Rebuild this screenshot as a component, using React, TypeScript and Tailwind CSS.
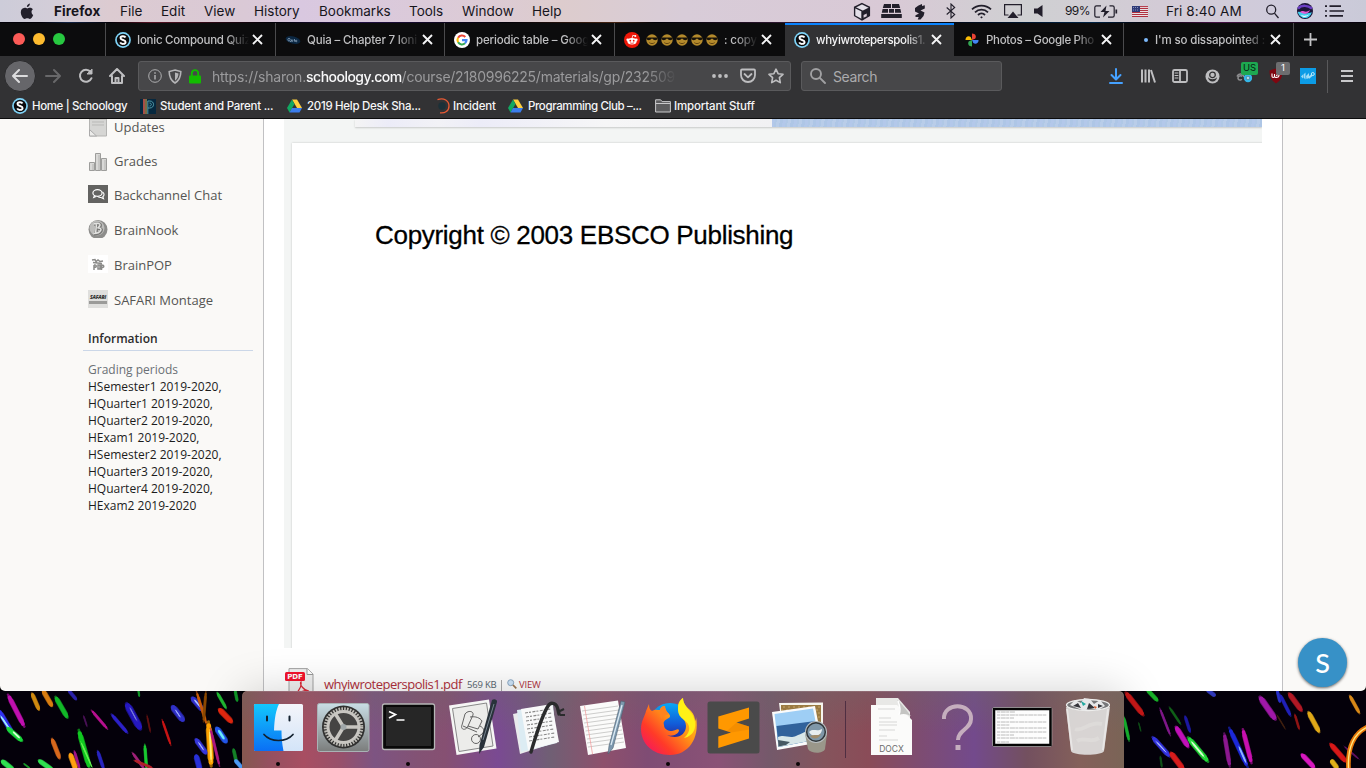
import type { ReactNode } from 'react';

const UI = "font-['Inter','Liberation_Sans',sans-serif]";
const PAGE = "font-['Open_Sans','Noto_Sans',sans-serif]";

/* ---------- menu bar ---------- */

const menus = [
  { label: 'Firefox', cls: 'w-[66px] font-bold tracking-[0.1px]' },
  { label: 'File', cls: 'w-[41px]' },
  { label: 'Edit', cls: 'w-[43px]' },
  { label: 'View', cls: 'w-[50px]' },
  { label: 'History', cls: 'w-[65px]' },
  { label: 'Bookmarks', cls: 'w-[90px]' },
  { label: 'Tools', cls: 'w-[53px]' },
  { label: 'Window', cls: 'w-[70px]' },
  { label: 'Help', cls: 'w-[40px]' },
];

function MenuBar() {
  return (
    <header className="flex h-[22px] shrink-0 items-center bg-[linear-gradient(90deg,#cdccd9_0%,#d3cdd8_4%,#dccbd1_8%,#dac9d6_18%,#d9c8e0_22%,#dccbd6_35%,#ddcccd_41%,#d8ccd8_50%,#d9c9d6_65%,#cfd0d2_75%,#d3cbd6_85%,#cecbdc_95%,#cacad8_100%)] text-[13.5px] leading-[22px] text-[#17151c]">
      <svg className="ml-5 mr-5 h-[17px] w-[14px] shrink-0" viewBox="0 0 14 17" fill="#221f2b">
        <path d="M9.9.6c.1 1.900-1.300 3.500-3 3.500C6.700 2.300 8.200.8 9.900.6zM11.500 8.800c0-1.600 1.300-2.400 1.400-2.500-1-1.300-2.300-1.500-2.700-1.500-1.200-.1-2.300.7-2.900.7s-1.500-.7-2.500-.7C2.300 4.900.800 6.700.8 9.300c0 2.700 1.900 6.600 3.900 6.600 1 0 1.400-.6 2.600-.6s1.600.6 2.600.6c1.500 0 2.800-2.500 3.300-4-.2-.1-1.700-.8-1.700-3.100z" />
      </svg>
      <nav className="flex">
        {menus.map((m) => (
          <span key={m.label} className={`shrink-0 whitespace-nowrap ${m.cls}`}>{m.label}</span>
        ))}
      </nav>
      <div className="ml-auto flex h-full items-center pr-[22px]">
        <svg className="mr-[10px] h-[19px] w-[18px]" viewBox="0 0 17 18">
          <path d="M8.500 1.500L15.500 5v8l-7 4-7-4V5z" fill="#e3dfe8" stroke="#221f2b" strokeWidth="1.300" />
          <path d="M8.500 8.500l7-3.500v8l-7 4z" fill="#221f2b" /><path d="M10 12.300l3-1.500v2.700L10 15z" fill="#d8ccd8" />
          <path d="M1.500 5l7 3.500v8" fill="none" stroke="#221f2b" strokeWidth="1.300" />
        </svg>
        <svg className="mr-3 h-[15px] w-[21px]" viewBox="0 0 21 15" fill="#221f2b">
          <path d="M3 0h7v4H1.800zM11 0h7l1.200 4H11zM1.600 5H7v3.800H.8zM8 5h5v3.800H8zM14 5h5.400l.8 3.800H14zM.2 10h20.600v4H.2z" />
        </svg>
        <svg className="mr-5 h-[17px] w-[12px]" viewBox="0 0 12 17" fill="#221f2b">
          <path d="M4.500 2.500L8 1v2l2.800-.8v3.300L6.500 7.500l4 2-1 3.500-3 3.500H3.700l1-2.500H1.500v-1.800L5 10.500 1 8.500V5z" />
        </svg>
        <svg className="mr-[15px] h-[16px] w-[10px]" viewBox="0 0 10 16" fill="none" stroke="#221f2b" strokeWidth="1.100">
          <path d="M.7 4.500l8 7L5 15V1l3.700 3.500-8 7" />
        </svg>
        <svg className="mr-3 h-[15px] w-[21px]" viewBox="0 0 21 15" fill="none" stroke="#221f2b" strokeWidth="1.800">
          <path d="M1 5.300c5.300-5 13.700-5 19 0M4 8.300c3.700-3.500 9.300-3.500 13 0M7 11c2-2 5-2 7 0" /><path d="M10.500 12.200l-1.300 1 1.300 1.300 1.300-1.300z" fill="#221f2b" stroke="none" />
        </svg>
        <svg className="mr-3 h-[15px] w-[18px]" viewBox="0 0 18 15">
          <path d="M4.500 11H.6V.6h16.800V11h-3.900" fill="none" stroke="#221f2b" strokeWidth="1.200" /><path d="M9 7.500l5.500 6.500h-11z" fill="#221f2b" />
        </svg>
        <svg className="mr-[22px] h-[12px] w-[9px]" viewBox="0 0 9 12" fill="#221f2b"><path d="M0 3.500h3.500L8.500 0v12L3.500 8.500H0z" /></svg>
        <span className="w-[29px] whitespace-nowrap text-[12px] tracking-[-0.6px]">99%</span>
        <svg className="mr-[14px] h-[13px] w-[24px]" viewBox="0 0 24 13" fill="none" stroke="#221f2b" strokeWidth="1.200">
          <path d="M7 .8H2.500C1.500.8.800 1.500.8 2.500v8c0 1 .7 1.700 1.700 1.700H6M15.500.8h3c1 0 1.700.7 1.700 1.700v8c0 1-.7 1.700-1.700 1.700H14" />
          <path d="M12.500.5L6.500 7h4l-1.500 5.500L15.500 6h-4z" fill="#221f2b" stroke="none" /><path d="M22.300 4.500v4" strokeWidth="1.700" />
        </svg>
        <svg className="mr-[18px] h-[11px] w-[16px]" viewBox="0 0 16 11">
          <path d="M0 0h16v11H0z" fill="#e9e0e4" /><path d="M0 .6h16M0 2.500h16M0 4.500h16M0 6.500h16M0 8.500h16M0 10.500h16" stroke="#b03140" /><path d="M0 0h8v6H0z" fill="#2f3b78" /><path d="M1 1.500h6M1 4h6" stroke="#9fa6cc" strokeWidth=".8" strokeDasharray="1 1" />
        </svg>
        <span className="w-[100px] whitespace-nowrap tracking-[0.1px]">Fri 8:40 AM</span>
        <svg className="mr-[18px] h-[15px] w-[13px]" viewBox="0 0 13 15" fill="none" stroke="#221f2b" strokeWidth="1.300"><circle cx="5.200" cy="5.700" r="4.500" /><path d="M8.400 9.200L12.500 14" /></svg>
        <svg className="mr-3 h-4 w-4" viewBox="0 0 16 16">
          <circle cx="8" cy="8" r="8" fill="#1b1437" /><path d="M1 5.500c4-4 10-3 14 0" stroke="#6b3fc4" strokeWidth="2.500" fill="none" /><path d="M.8 9c4-1 5 3 14 .3-1 3.500-3.500 5.800-6.800 5.800S1.500 12.500.8 9z" fill="#44d0ee" /><path d="M3 9c3-3 5 2 10-2-1 4-6 5-10 2z" fill="#e45ad2" /><path d="M4 12c3 1 5 1 8-.5-2 3-6 3.500-8 .5z" fill="#e8fbff" />
        </svg>
        <svg className="h-[12px] w-[19px]" viewBox="0 0 19 12" stroke="#221f2b" strokeWidth="1.700"><path d="M0 1.200h2M4.500 1.200H16M0 6h2M4.500 6H19M0 10.800h2M4.500 10.800H18" /></svg>
      </div>
    </header>
  );
}

/* ---------- site icons ---------- */

function SchoologyIcon() {
  return (
    <svg className="h-4 w-4" viewBox="0 0 16 16">
      <circle cx="8" cy="8" r="7.900" fill="#7fd3f7" /><circle cx="8" cy="8" r="6.200" fill="#0a0a0c" />
      <path d="M10.500 5.500C9.700 3.700 5.500 3.700 5.500 6c0 2.500 5.100 1.500 5.100 4 0 2.500-4.500 2.500-5.400.4" fill="none" stroke="#fff" strokeWidth="1.900" />
    </svg>
  );
}

function DriveIcon() {
  return (
    <svg className="h-[14px] w-[15px]" viewBox="0 0 15 14">
      <path d="M5 .5h5l5 8.500h-5z" fill="#ffcf3f" /><path d="M5 .5L7.500 4.900 2.500 13.500 0 9z" fill="#11a861" /><path d="M5 9h10l-2.500 4.500h-10z" fill="#3b7ded" />
    </svg>
  );
}

function QuiaIcon() {
  return (
    <svg className="h-4 w-4" viewBox="0 0 16 16">
      <ellipse cx="8" cy="8" rx="7.500" ry="3.600" transform="rotate(14 8 8)" fill="#0b2742" /><path d="M4 6.200c-1.500 0-1.500 3 0 3s1.500-3 0-3zM5 9l1 1M6.500 7.500v1.800h1.300V7.500M9.500 7v2.600M11.200 8.200c-1.200 0-1 1.600 0 1.600s1-1.600 0-1.600z" stroke="#9ab4cd" strokeWidth=".7" fill="none" />
    </svg>
  );
}

function GoogleIcon() {
  return (
    <svg className="h-4 w-4" viewBox="0 0 16 16" fill="none" strokeWidth="2.100">
      <circle cx="8" cy="8" r="8" fill="#fff" /><path d="M11.300 5A4.500 4.500 0 0 0 4.100 5.700" stroke="#ea4335" /><path d="M4.100 5.700a4.500 4.500 0 0 0 0 4.600" stroke="#fbbc05" /><path d="M4.100 10.300a4.500 4.500 0 0 0 6.900 1" stroke="#34a853" /><path d="M8 8.100h4.500a4.500 4.500 0 0 1-1.500 3.200" stroke="#4285f4" />
    </svg>
  );
}

function RedditIcon() {
  return (
    <svg className="h-4 w-4" viewBox="0 0 16 16">
      <circle cx="8" cy="8" r="8" fill="#ee1708" /><ellipse cx="8" cy="9.300" rx="4.600" ry="3.300" fill="#fff" /><circle cx="3.700" cy="7.800" r="1.300" fill="#fff" /><circle cx="12.300" cy="7.800" r="1.300" fill="#fff" /><path d="M8 6.300l.8-3 2.300.6" stroke="#fff" fill="none" strokeWidth=".8" /><circle cx="11.300" cy="4" r="1" fill="#fff" /><circle cx="6.300" cy="8.700" r=".9" fill="#ee1708" /><circle cx="9.700" cy="8.700" r=".9" fill="#ee1708" /><path d="M6 10.700c1 .8 3 .8 4 0" stroke="#ee1708" fill="none" strokeWidth=".7" />
    </svg>
  );
}

function PhotosIcon() {
  return (
    <svg className="h-[14px] w-[14px]" viewBox="0 0 16 16">
      <path d="M8 8V.5c4 0 5.500 3.500 3.500 6z" fill="#fbbc05" transform="rotate(-90 8 8)" /><path d="M8 8V.5c4 0 5.500 3.500 3.500 6z" fill="#ea4335" /><path d="M8 8V.5c4 0 5.500 3.500 3.500 6z" fill="#4285f4" transform="rotate(90 8 8)" /><path d="M8 8V.5c4 0 5.500 3.500 3.500 6z" fill="#34a853" transform="rotate(180 8 8)" />
    </svg>
  );
}

function CoolFace() {
  return (
    <svg className="h-3 w-3 shrink-0" viewBox="0 0 12 12">
      <circle cx="6" cy="6" r="5.700" fill="#b48a2c" /><path d="M.4 3.600h11.200v1c-.3 1.900-3.800 2.300-4.900.2h-1.400c-1.100 2.100-4.600 1.700-4.900-.2z" fill="#16110a" /><path d="M3.300 8.600c1.500 1.300 3.900 1.300 5.400 0" stroke="#5b3d0d" fill="none" strokeWidth=".9" />
    </svg>
  );
}

/* ---------- tab strip ---------- */

type Tab = { w: string; icon: ReactNode; text: ReactNode; active?: boolean; tone: string };

const tabs: Tab[] = [
  { w: 'w-[170px]', icon: <SchoologyIcon />, text: 'Ionic Compound Quiz', tone: 'text-[#c0c0c2] tracking-[-0.25px]' },
  { w: 'w-[169px]', icon: <QuiaIcon />, text: 'Quia – Chapter 7 Ioni', tone: 'text-[#c0c0c2] tracking-[-0.17px]' },
  { w: 'w-[170px]', icon: <GoogleIcon />, text: 'periodic table – Goog', tone: 'text-[#c0c0c2] tracking-[-0.17px]' },
  {
    w: 'w-[171px]',
    icon: <RedditIcon />,
    text: (
      <span className="flex items-center gap-[3px]">
        <CoolFace /><CoolFace /><CoolFace /><CoolFace /><CoolFace />
        <span className="ml-[3px] whitespace-nowrap">: copy</span>
      </span>
    ),
    tone: 'text-[#c0c0c2] tracking-[-0.1px]',
  },
  { w: 'w-[169px]', icon: <SchoologyIcon />, text: 'whyiwroteperspolis1.', active: true, tone: 'text-[#f4f4f5] tracking-[-0.33px]' },
  { w: 'w-[169px]', icon: <PhotosIcon />, text: 'Photos – Google Pho', tone: 'text-[#c0c0c2] tracking-[-0.3px]' },
  { w: 'w-[170px]', icon: <span className="ml-[11px] h-1 w-1 rounded-full bg-[#7cb9fb]" />, text: "I'm so dissapointed :", tone: 'text-[#c0c0c2] tracking-[-0.15px]' },
];

function TabStrip() {
  return (
    <div className="flex h-[34px] shrink-0 bg-[#0c0c0d] bg-[linear-gradient(90deg,#020008_0_3%,#124_5%,#020008_8%,#512_11%,#020008_20%,#214_26%,#020008_37%,#421_45%,#020008_48%,#424_62%,#020008_66%,#024_80%,#020008_84%,#414_89%,#020008)] bg-[length:100%_1px] bg-no-repeat">
      <div className="flex w-[105px] shrink-0 items-center gap-2 pl-[13px]">
        <span className="h-3 w-3 rounded-full bg-[#fc5b57]" />
        <span className="h-3 w-3 rounded-full bg-[#fdbb2f]" />
        <span className="h-3 w-3 rounded-full bg-[#27c840]" />
      </div>
      {tabs.map((t, i) => (
        <div
          key={i}
          className={`mt-px flex shrink-0 items-center ${t.w} ${t.active ? 'border-t-2 border-[#0a84ff] bg-[#323234] pb-0.5 pl-[9px]' : `${i === 5 ? 'pl-[11px]' : 'border-l border-[#4b4b4d] pl-[9px]'}`}`}
        >
          <span className="flex h-4 w-4 shrink-0 items-center">{t.icon}</span>
          <span className={`w-[112px] overflow-hidden whitespace-nowrap text-[11.5px] leading-4 font-medium [mask-image:linear-gradient(90deg,#000_80%,transparent)] ${i === 5 ? 'ml-[5px]' : 'ml-1.5'} ${t.tone}`}>{t.text}</span>
          <svg className="ml-[3px] h-[11px] w-[11px] shrink-0" viewBox="0 0 11 11" stroke="#f4f4f5" strokeWidth="1.900"><path d="M1 1l9 9M10 1l-9 9" /></svg>
        </div>
      ))}
      <div className="mt-px flex items-center border-l border-[#4b4b4d] pl-[9px]">
        <svg className="h-[15px] w-[15px]" viewBox="0 0 15 15" stroke="#c4c4c6" strokeWidth="1.800"><path d="M7.500 1v13M1 7.500h13" /></svg>
      </div>
    </div>
  );
}

/* ---------- navigation toolbar ---------- */

function Slot({ children, className = 'w-8' }: { children: ReactNode; className?: string }) {
  return <span className={`flex h-8 shrink-0 items-center justify-center ${className}`}>{children}</span>;
}

function NavBar() {
  const s = { fill: 'none', stroke: '#bebec0', strokeWidth: 2, strokeLinecap: 'round', strokeLinejoin: 'round' } as const;
  return (
    <div className="flex h-10 shrink-0 items-center bg-[#323234] pl-1">
      <span className="flex h-8 w-8 items-center justify-center rounded-full border border-[#2a2a2c] bg-[#66666a]">
        <svg className="h-4 w-4" viewBox="0 0 16 16" {...s} stroke="#dcdcde"><path d="M1 8h14M7 2L1 8l6 6" /></svg>
      </span>
      <Slot className="w-[34px]"><svg className="h-4 w-4" viewBox="0 0 16 16" {...s} stroke="#68686a"><path d="M1 8h14M9 2l6 6-6 6" /></svg></Slot>
      <Slot className="w-[31px]"><svg className="h-4 w-4" viewBox="0 0 16 16" {...s}><path d="M13.500 10.200A6 6 0 1 1 12.600 4" /><path d="M14 1.500V6H9.500z" fill="#bebec0" strokeWidth="1" /></svg></Slot>
      <Slot className="w-[32px]"><svg className="h-4 w-4" viewBox="0 0 16 16" {...s}><path d="M1 8l7-7 7 7M3 8v7h10V8" /><path d="M6.500 14.500V10h3v4.500" /></svg></Slot>
      <div className="ml-[5px] flex h-[30px] w-[653px] items-center rounded-[3px] border border-[#5a5a5c] bg-[#474749] pl-[9px] text-[14px]">
        <svg className="h-[14px] w-[14px]" viewBox="0 0 14 14" fill="none" stroke="#aeaeb0"><circle cx="7" cy="7" r="6.300" /><path d="M7 6v4.500M7 3.300v1.500" strokeWidth="1.500" /></svg>
        <svg className="ml-1.5 h-[15px] w-[14px]" viewBox="0 0 14 15"><path d="M7 1l5.800 1.500c0 5.500-1.600 9-5.800 11.500C2.800 11.500 1.200 8 1.200 2.500z" fill="none" stroke="#b4b4b6" strokeWidth="1.600" /><path d="M7 3.600l3.500.9c-.2 3.200-1.200 5.600-3.500 7.200z" fill="#b4b4b6" /></svg>
        <svg className="ml-[7px] h-[15px] w-[12px]" viewBox="0 0 12 15"><path d="M2.800 7V4.300a3.200 3.200 0 0 1 6.400 0V7" fill="none" stroke="#12bc00" strokeWidth="1.900" /><rect y="6.500" width="12" height="8" rx="1" fill="#12bc00" /></svg>
        <span className="ml-[11px] w-[465px] overflow-hidden whitespace-nowrap tracking-[-0.16px] text-[#9b9b9d] [mask-image:linear-gradient(90deg,#000_93%,transparent)]">
          https://sharon.<span className="font-medium tracking-[-0.52px] text-[#f9f9fa]">schoology.com</span><span className="tracking-[-0.26px]">/course/2180996225/materials/gp/232509</span>
        </span>
        <svg className="ml-auto h-4 w-4" viewBox="0 0 16 16" fill="#bebec0"><circle cx="2" cy="8" r="1.900" /><circle cx="8" cy="8" r="1.900" /><circle cx="14" cy="8" r="1.900" /></svg>
        <svg className="ml-3 h-4 w-4" viewBox="0 0 16 16" {...s} strokeWidth="1.800"><path d="M2 1.500h12c.6 0 1 .4 1 1V7c0 4-3 7-7 7s-7-3-7-7V2.500c0-.6.4-1 1-1z" /><path d="M4.500 6L8 9.300 11.500 6" /></svg>
        <svg className="mr-[6px] ml-3 h-4 w-4" viewBox="0 0 16 16" {...s} strokeWidth="1.600"><path d="M8 1.200l2.100 4.500 4.900.6-3.600 3.400.9 4.900L8 12.200l-4.300 2.400.9-4.900L1 6.300l4.900-.6z" /></svg>
      </div>
      <div className="ml-[10px] flex h-[30px] w-[201px] items-center rounded-[3px] border border-[#5a5a5c] bg-[#474749] pl-2 text-[14px] text-[#ababad]">
        <svg className="h-4 w-4" viewBox="0 0 16 16" fill="none" stroke="#a0a0a2" strokeWidth="1.900" strokeLinecap="round"><circle cx="6" cy="6" r="5" /><path d="M9.800 9.800L15 15" /></svg>
        <span className="ml-[7px] tracking-[-0.4px]">Search</span>
      </div>
      <div className="ml-[98px] flex">
        <Slot><svg className="h-4 w-[14px]" viewBox="0 0 14 16" {...s} stroke="#45a1ff"><path d="M7 1v10M2.500 7L7 11.500 11.500 7M1 15h12" /></svg></Slot>
        <Slot><svg className="h-4 w-4" viewBox="0 0 16 16" {...s} strokeLinecap="butt"><path d="M2 1.500v13M5.500 1.500v13M9 1.500v13M11 2l4 12.500" /></svg></Slot>
        <Slot><svg className="h-4 w-4" viewBox="0 0 16 16" {...s} strokeWidth="1.800"><rect x="1" y="2" width="14" height="12" rx="1.500" /><path d="M8 2v12" /><path d="M3 5h3M3 7.500h3M3 10h3" strokeWidth="1" /></svg></Slot>
        <Slot><svg className="h-[15px] w-[15px]" viewBox="0 0 15 15"><circle cx="7.500" cy="7.500" r="7" fill="#bebec0" /><path d="M3 8.300c.3 2.700 2 4.200 4.500 4.200s4.200-1.500 4.500-4.200c-1 1.300-2.500 2-4.500 2s-3.500-.7-4.500-2z" fill="#323234" /><circle cx="7.500" cy="5.900" r="2.800" fill="#bebec0" stroke="#323234" strokeWidth="1.300" /></svg></Slot>
        <Slot className="relative w-8">
          <svg className="h-4 w-4" viewBox="0 0 16 16" fill="none" stroke="#8d8d8f" strokeWidth="1.500"><path d="M6 8.500c-1.500-1.500-4.500 0-4 2s3.500 2 3.500.5M1 8.500C2.500 5 7 5 8 9" /><circle cx="12" cy="10" r="3" stroke="#35b7e8" strokeWidth="2.400" /><circle cx="12" cy="10" r="1.300" fill="#e5f7ff" stroke="#7bc" strokeWidth=".8" /></svg>
          <span className="absolute top-[2px] left-[13px] flex h-[13px] w-[17px] items-center justify-center rounded-[2px] bg-[#1ea851] text-[9.500px] text-[#052310]">US</span>
        </Slot>
        <Slot className="relative w-8">
          <svg className="h-4 w-[14px]" viewBox="0 0 14 16"><path d="M7 .5l6.500 2c0 6-1.500 10-6.500 13C2 12.500.5 8.500.5 2.500z" fill="#800610" /><path d="M3 5.500v2.800c0 1.500 2.500 1.500 2.500 0V6M5.500 8.300c0 1.500 4.500 1.500 4.500-.5S7.500 6.500 7.500 8" fill="none" stroke="#fff" strokeWidth="1.100" /></svg>
          <span className="absolute top-[2px] left-4 flex h-[13px] w-[14px] items-center justify-center rounded-[2px] bg-[#6d6d6f] text-[9.500px] text-white">1</span>
        </Slot>
        <Slot><svg className="h-4 w-4" viewBox="0 0 16 16"><path d="M0 0h16v16H0z" fill="#0c9ce6" /><path d="M1 8.500l2-2v4zM3.500 6.500l2-2v7l-2-2zM6 8l3-3v5L6.500 11z" fill="#9edcf7" /><path d="M8.500 10l3.500-3" stroke="#9edcf7" strokeWidth="2.200" /><circle cx="12.800" cy="6" r="1.500" fill="none" stroke="#bde9fa" /></svg></Slot>
      </div>
      <span className="ml-[3px] h-[33px] w-px bg-[#59595b]" />
      <svg className="ml-[13px] h-3 w-3" viewBox="0 0 12 12" stroke="#c8c8ca" strokeWidth="1.900"><path d="M0 1h12M0 6h12M0 11h12" /></svg>
    </div>
  );
}

const bookmarks = [
  { w: 'w-[128px]', icon: <SchoologyIcon />, label: 'Home | Schoology', gap: 'w-5', fit: 'tracking-[-0.37px]' },
  {
    w: 'w-[147px]',
    icon: <svg className="h-[15px] w-4" viewBox="0 0 16 15"><path d="M0 0h16v15H0z" fill="#06283f" /><path d="M4 0v15" stroke="#dd5b4b" strokeWidth="1.500" /><path d="M6 0v15" stroke="#e7b24c" /><path d="M7.800 15V2h2c5 0 5 7 0 7H8M9.500 4c2.500 0 2.500 3 0 3" fill="none" stroke="#58a7b4" strokeWidth=".9" /></svg>,
    label: 'Student and Parent ...',
    gap: 'w-5',
    fit: 'tracking-[-0.25px]',
  },
  { w: 'w-[149px]', icon: <DriveIcon />, label: '2019 Help Desk Sha...', gap: 'w-5', fit: 'tracking-[-0.3px]' },
  { w: 'w-[72px]', icon: <svg className="h-4 w-[14px]" viewBox="0 0 14 16"><circle cx="6" cy="8" r="3.700" fill="#1b3038" /><path d="M1.500 1.700C8-1 13 3 13 8s-4 7.500-9 6.800" fill="none" stroke="#e95a34" strokeWidth="1.300" /></svg>, label: 'Incident', gap: 'w-[17px]', fit: 'tracking-[-0.2px]' },
  { w: 'w-[147px]', icon: <DriveIcon />, label: 'Programming Club –...', gap: 'w-5', fit: 'tracking-[-0.38px]' },
  { w: 'w-[110px]', icon: <svg className="h-[14px] w-4" viewBox="0 0 16 14" fill="#5c5c5e" stroke="#c8c8ca"><path d="M.6 13V.8h5l1.500 1.800h8.300V13z" /><path d="M.6 4.500h14.800" /></svg>, label: 'Important Stuff', gap: 'w-[19px]', fit: 'tracking-[-0.15px]' },
];

function BookmarkBar() {
  return (
    <div className="flex h-[23px] shrink-0 items-center border-b border-[#0c0c0d] bg-[#323234] pb-[2px] pl-3 text-[11.5px] leading-4 font-medium text-[#f6f6f7]">
      {bookmarks.map((b) => (
        <span key={b.label} className={`flex shrink-0 items-center ${b.w}`}>
          <span className={`flex shrink-0 items-center ${b.gap}`}>{b.icon}</span>
          <span className={`whitespace-nowrap ${b.fit}`}>{b.label}</span>
        </span>
      ))}
    </div>
  );
}

/* ---------- page ---------- */

const links = [
  {
    label: 'Updates',
    h: 'h-[34px]',
    icon: <svg className="h-[18px] w-5" viewBox="0 0 20 18"><path d="M1.500 0h17v17h-17z" fill="#d6d6d4" stroke="#b4b4b2" /><path d="M4 3h12M4 6h12" stroke="#b9b9b7" /><path d="M1.500 10.500l7 6.500h-7z" fill="#ececea" stroke="#aaa" /></svg>,
  },
  {
    label: 'Grades',
    h: 'h-[34px]',
    icon: <svg className="mb-px h-5 w-5" viewBox="0 0 20 20" fill="#d9d9d7" stroke="#9d9d9b"><path d="M1.500 10.500h5v8h-5zM7.500 1.500h5v17h-5zM13.500 6.500h5v12h-5z" /><path d="M5 12v6M11 3v15M17 8v10" stroke="#b5b5b3" /></svg>,
  },
  {
    label: 'Backchannel Chat',
    h: 'h-[34px]',
    icon: <svg className="mb-1 h-[18px] w-5" viewBox="0 0 20 18"><path d="M0 0h20v18H0z" fill="#636361" /><ellipse cx="9.500" cy="8" rx="4.600" ry="3.300" fill="none" stroke="#fff" strokeWidth="1.200" /><path d="M6.500 10.500l-.8 2 2.300-1M14.500 7c2.500 1.500 1.500 4 .3 4.700l.7 2-2.500-1.200c-1.200.1-2-.1-2.800-.7" fill="none" stroke="#fff" strokeWidth="1.100" /></svg>,
  },
  {
    label: 'BrainNook',
    h: 'h-[35px]',
    icon: <svg className="mb-[3px] h-[18px] w-5" viewBox="0 0 20 18"><circle cx="10" cy="9.500" r="9.500" fill="#8d8d8b" /><circle cx="9" cy="8" r="7.500" fill="#bcbcba" /><path d="M6 4.500c6-2 9 .5 4 4 6-1 4 5.500-4 5.500M9 4.500L8 14" fill="none" stroke="#777775" strokeWidth="3" /><path d="M5.500 4c6-2 9 .5 4 4 6-1 4 5.500-4 5.500M8.500 4l-1 10" fill="none" stroke="#e2e2e0" strokeWidth="1.500" /></svg>,
  },
  {
    label: 'BrainPOP',
    h: 'h-[35px]',
    icon: <svg className="mb-[3px] h-[18px] w-5" viewBox="0 0 20 18"><path d="M0 0h20v18H0z" fill="#fff" /><path d="M4 5l3-.5 1 2 2-1.500 2 1.500 3-.5M5 7.500l9 1M6 10v5M6 10c3-.5 3 2.500 0 2.500M10 10v4h2v-4zM13.500 15v-5c3 0 3 2.500 0 2.500" fill="none" stroke="#8b8b89" strokeWidth="1.500" /></svg>,
  },
  {
    label: 'SAFARI Montage',
    h: 'h-[35px]',
    icon: <span className="mb-[3px] flex h-[18px] w-5 flex-col items-center justify-center overflow-hidden bg-[#dfdfdd]"><span className="text-[5px] leading-[6px] font-extrabold tracking-[-0.2px] text-[#333] italic">SAFARI</span><span className="mt-px h-[3px] w-[18px] bg-[#9b9b99]" /></span>,
  },
];

const periods = ['HSemester1 2019-2020,', 'HQuarter1 2019-2020,', 'HQuarter2 2019-2020,', 'HExam1 2019-2020,', 'HSemester2 2019-2020,', 'HQuarter3 2019-2020,', 'HQuarter4 2019-2020,', 'HExam2 2019-2020'];

function Sidebar() {
  return (
    <aside className="w-[263px] shrink-0 pl-[88px]">
      <ul className="-mt-2 text-[13px] text-[#555553]">
        {links.map((l) => (
          <li key={l.label} className={`flex items-center ${l.h}`}>
            <span className="flex w-[26px] shrink-0">{l.icon}</span>
            <span className="whitespace-nowrap">{l.label}</span>
          </li>
        ))}
      </ul>
      <h3 className="mt-[10px] -ml-[5px] w-[170px] border-b border-[#cbd7e8] pl-[5px] text-[12px] leading-[22px] font-semibold text-[#2c2c2c]">Information</h3>
      <div className="mt-[10px] text-[12px] leading-[17px] text-[#1c1c1c]">
        <p className="text-[#6a7075]">Grading periods</p>
        {periods.map((p) => <p key={p} className="whitespace-nowrap">{p}</p>)}
      </div>
    </aside>
  );
}

function Page() {
  return (
    <div className="h-[572px] shrink-0 bg-black">
      <div className={`relative flex h-full overflow-hidden rounded-b-[5px] bg-[#faf9f7] ${PAGE}`}>
        <Sidebar />
        <main className="flex w-[1020px] shrink-0 flex-col border-x border-[#c1c1c3] bg-white pl-5">
          <div className="flex h-[529px] w-[978px] shrink-0 flex-col overflow-hidden bg-[#f3f5f4]">
            <div className="ml-[71px] flex h-2 shrink-0 bg-[#f3f3f7] shadow-[0_1px_2px_rgba(0,0,0,0.18)]">
              <span className="h-full w-[417px] bg-[linear-gradient(90deg,#f4f4f4,#ececf8_8%,#f2f2f6_20%,#ececf8_30%,#f6f6f7_60%,#f1f1f3)]" />
              <span className="h-full flex-1 bg-[repeating-linear-gradient(100deg,#b3c8ea_0_3px,#b0c8e6_3px_5px,#b9cde9_5px_8px,#aec6e6_8px_11px)]" />
            </div>
            <div className="mt-4 -mr-1 -mb-1 ml-2 flex-1 bg-white pt-[76px] pl-[83px] shadow-[0_0_2px_rgba(0,0,0,0.2)]">
              <p className="font-['Liberation_Sans',Arial,sans-serif] text-[26px] leading-8 tracking-[-0.3px] whitespace-nowrap text-black [-webkit-text-stroke:0.3px_#000]">Copyright © 2003 EBSCO Publishing</p>
            </div>
          </div>
          <div className="mt-5 flex h-8 items-center">
            <svg className="h-8 w-[30px] shrink-0" viewBox="0 0 30 32">
              <path d="M5 .6h18.500L29 6v28H5z" fill="#f0f0f0" stroke="#a3a3a3" /><path d="M23 .6V6.500h6" fill="#fff" stroke="#999" /><path d="M10 27c4-3 8-7 7-13-2 2 3 9 8 9-5-1-10 1-14 6" fill="none" stroke="#db2a38" strokeWidth="1.200" />
              <rect x="1" y="4" width="20" height="9" rx="1.500" fill="#f4122c" /><text x="11" y="11" textAnchor="middle" fontSize="7" fontWeight="700" fill="#fff" fontFamily="DejaVu Sans">PDF</text>
            </svg>
            <span className="mt-px ml-[10px] w-[143px] text-[13px] tracking-[-0.5px] whitespace-nowrap text-[#b0303c]">whyiwroteperspolis1.pdf</span>
            <span className="mt-[3px] w-[34px] text-[9.500px] tracking-[-0.2px] whitespace-nowrap text-[#56646e]">569 KB</span>
            <span className="mt-[2px] h-[11px] w-px bg-[#aaa]" />
            <svg className="ml-[5px] h-[10px] w-[10px]" viewBox="0 0 10 10"><circle cx="3.700" cy="3.700" r="3" fill="#cfe6fa" stroke="#8ba8c4" /><path d="M6 6l3.300 3.300" stroke="#9a7650" strokeWidth="1.700" /></svg>
            <span className="mt-[3px] ml-[2px] text-[9.500px] tracking-[-0.2px] text-[#b0303c]">VIEW</span>
          </div>
        </main>
        <span className="absolute top-[519px] left-[1298px] flex h-[49px] w-[49px] items-center justify-center rounded-full bg-[#3791c7] pt-0.5 font-['Lato','Open_Sans',sans-serif] text-[27px] font-medium text-white shadow-[0_1px_3px_rgba(0,0,0,0.6)]">S</span>
      </div>
    </div>
  );
}

/* ---------- wallpaper and dock ---------- */

type Streak = [number, number, number, number, string, number];

const leftStreaks: Streak[] = [
  [22, 160, 75, 264, '#c010b0', 14], [95, 158, 118, 212, '#d08a10', 12], [128, 150, 157, 200, '#d87c10', 14], [165, 168, 204, 236, '#12b828', 14],
  [-5, 208, 40, 285, '#3030f0', 14], [0, 225, 34, 276, '#a0f0ff', 5], [20, 262, 68, 304, '#19d83a', 14], [38, 274, 60, 295, '#d8ffd8', 5],
  [205, 150, 230, 180, '#2a20a8', 10], [272, 208, 325, 270, '#b81090', 8], [332, 220, 385, 282, '#2c20c8', 10], [378, 188, 423, 270, '#2518c0', 20],
  [388, 200, 412, 245, '#7d80d8', 3], [250, 225, 262, 262, '#481055', 5], [440, 222, 452, 280, '#601010', 5], [485, 235, 514, 320, '#c81414', 7],
  [516, 198, 551, 243, '#3030c8', 18], [525, 208, 542, 233, '#9fb0ff', 3], [575, 172, 610, 212, '#3030d0', 16], [582, 178, 603, 203, '#b6c8ff', 4],
  [588, 150, 622, 260, '#c85a08', 8], [618, 150, 610, 250, '#8c4800', 8], [625, 240, 634, 384, '#ffa400', 17], [629, 265, 634, 370, '#fff078', 5],
  [630, 260, 660, 384, '#b01880', 8], [650, 155, 680, 208, '#20b832', 9], [656, 206, 697, 248, '#e62810', 16], [705, 150, 712, 185, '#109828', 9],
  [648, 262, 680, 308, '#2458f0', 17], [655, 270, 673, 298, '#6ff4ff', 7], [586, 296, 620, 342, '#3636da', 15], [594, 305, 612, 332, '#aab8ff', 3],
  [235, 265, 270, 390, '#10c820', 15], [240, 300, 280, 390, '#66f050', 4], [222, 330, 240, 390, '#a01488', 8], [210, 340, 228, 390, '#ffa010', 15],
  [155, 294, 180, 358, '#d8681c', 13], [115, 360, 160, 392, '#30e050', 14], [5, 362, 40, 390, '#30e050', 15], [292, 330, 312, 390, '#2824c0', 10],
  [434, 310, 440, 390, '#18c830', 9], [395, 335, 435, 390, '#a02078', 8], [588, 345, 600, 390, '#2830d8', 16], [700, 325, 710, 370, '#158828', 10],
  [705, 360, 730, 388, '#50a0ff', 12], [415, 150, 418, 170, '#109828', 6], [400, 360, 460, 385, '#b02028', 8], [70, 370, 90, 385, '#189828', 5],
];

const rightStreaks: Streak[] = [
  [850, 185, 907, 258, '#c81818', 15], [845, 255, 863, 335, '#18b830', 9], [915, 178, 948, 213, '#18b028', 12], [952, 230, 987, 320, '#80188a', 7],
  [980, 228, 1018, 285, '#106018', 7], [1028, 255, 1045, 308, '#1c18a0', 9], [1000, 287, 1040, 352, '#c010b8', 15], [1035, 318, 1100, 396, '#22d838', 15],
  [1045, 330, 1088, 382, '#d8ffd0', 5], [930, 318, 985, 380, '#3434e0', 14], [940, 330, 975, 368, '#b0c0ff', 3], [985, 365, 1025, 418, '#d81c1c', 16],
  [1095, 180, 1118, 197, '#3038b8', 12], [1145, 305, 1163, 412, '#8c1890', 12], [1158, 287, 1218, 415, '#1c28d8', 13], [1188, 345, 1212, 400, '#90b8ff', 5],
  [1200, 292, 1228, 402, '#c810b0', 13], [1250, 198, 1300, 270, '#a018a8', 17], [1303, 180, 1312, 218, '#2830c8', 9], [1310, 190, 1345, 260, '#2020b8', 10],
  [1337, 188, 1378, 244, '#b01824', 15], [1355, 250, 1370, 300, '#901414', 7], [1395, 243, 1430, 308, '#e0a818', 14], [1518, 194, 1550, 252, '#d88818', 10],
  [1375, 370, 1415, 412, '#d818c0', 14], [1460, 338, 1510, 395, '#d81818', 15], [1465, 390, 1482, 412, '#e0b018', 14], [1500, 345, 1550, 388, '#601060', 5],
  [890, 275, 898, 305, '#105018', 4], [955, 375, 960, 412, '#105018', 6], [1300, 250, 1330, 300, '#402010', 4],
];

function Wallpaper({ box, streaks, arc }: { box: string; streaks: Streak[]; arc?: boolean }) {
  return (
    <svg className="h-[77px] w-[242px] shrink-0 bg-[#04000a]" viewBox={box} preserveAspectRatio="none">
      {streaks.map(([x1, y1, x2, y2, color, w], i) => {
        const dx = x2 - x1, dy = y2 - y1;
        const line = (inset: number) => ({ x1: x1 + dx * inset, y1: y1 + dy * inset, x2: x2 - dx * inset, y2: y2 - dy * inset });
        return (
          <g key={i} stroke={color} strokeLinecap="round">
            <line {...line(0.04)} strokeWidth={w * 0.55} opacity=".6" />
            <line {...line(0.12)} strokeWidth={w * 0.85} />
            <line {...line(0.22)} strokeWidth={w * 1.15} opacity=".7" />
          </g>
        );
      })}
      {arc && (
        <g fill="none">
          <path d="M1516 416C1512 350 1530 310 1572 290" stroke="#e87808" strokeWidth="14" />
          <path d="M1516 416C1512 350 1530 310 1572 290" stroke="#ffe880" strokeWidth="4" />
        </g>
      )}
    </svg>
  );
}

function DockItem({ children, running }: { children: ReactNode; running?: boolean }) {
  return (
    <svg className="h-[77px] w-[65px] shrink-0" viewBox="0 0 65 77">
      {children}
      {running && <circle cx="32" cy="73" r="2" fill="#0c0608" />}
    </svg>
  );
}

function Dock() {
  return (
    <div className="z-10 flex w-[882px] shrink-0 rounded-t-[5px] bg-[linear-gradient(180deg,rgba(110,100,105,0.35),rgba(100,80,110,0)_55%),linear-gradient(90deg,#85584f_0%,#94505f_3%,#a84e62_7%,#98506a_11%,#7d5482_15%,#835274_20%,#865072_23%,#7a4a92_29%,#705f74_35%,#8e506c_41%,#7f4c74_46%,#8a5276_54%,#74596a_60%,#85545c_66%,#8a4c58_71%,#7d4c72_77%,#734a8c_83%,#73505f_89%,#84605a_95%,#7a6456_100%)] pl-[4px] shadow-[inset_0_1px_0_rgba(255,255,255,0.12),0_0_44px_rgba(0,0,0,0.18)]">
      <DockItem running>
        <defs>
          <linearGradient id="fa" x2="0" y2="1"><stop stopColor="#13c8fc" /><stop offset="1" stopColor="#0a6ff5" /></linearGradient>
          <linearGradient id="fb" x2="0" y2="1"><stop stopColor="#f4f5fa" /><stop offset="1" stopColor="#d3e4f8" /></linearGradient>
        </defs>
        <rect x="8" y="13" width="49" height="47" rx="1.500" fill="url(#fb)" /><path d="M9.500 13H33C30 19 28.500 27 28 39.500h7.500c0 7 .5 13 2 20.500H9.500c-1 0-1.500-.5-1.500-1.500V14.500c0-1 .5-1.500 1.500-1.500z" fill="url(#fa)" />
        <path d="M21 25.500v4M43.500 25.500v4" stroke="#12202e" strokeWidth="2" strokeLinecap="round" /><path d="M18 43.500c7 8 22 8 29 0" fill="none" stroke="#12202e" strokeWidth="1.700" strokeLinecap="round" />
      </DockItem>
      <DockItem>
        <defs><linearGradient id="sp" x2="0" y2="1"><stop stopColor="#c9dde5" /><stop offset="1" stopColor="#7b7d7c" /></linearGradient></defs>
        <rect x="6.500" y="12.500" width="51.500" height="48" rx="2" fill="url(#sp)" stroke="#a9b3b5" /><circle cx="32.500" cy="36" r="21.500" fill="#30302f" />
        <circle cx="32.500" cy="36" r="18" fill="none" stroke="#bdbbb5" strokeWidth="3.500" strokeDasharray="1.700 1.130" /><circle cx="32.500" cy="36" r="15.500" fill="#454443" stroke="#c8c6c1" strokeWidth="3" />
        <path d="M32.500 36h15M32.500 36l-8-13M32.500 36l-8 13" stroke="#c8c6c1" strokeWidth="3.500" /><circle cx="32.500" cy="36" r="3" fill="#9fa6a8" />
      </DockItem>
      <DockItem running>
        <rect x="6.500" y="13" width="52" height="45.500" rx="2" fill="#090909" stroke="#b5b5b5" strokeWidth="1.300" /><rect x="10" y="16" width="45" height="39" fill="#262626" />
        <path d="M13 20.500l6.500 3-6.500 3.500" fill="none" stroke="#fff" strokeWidth="1.700" /><path d="M20.500 29h8" stroke="#fff" strokeWidth="1.500" />
      </DockItem>
      <DockItem>
        <path d="M8 14.500L48 8.500 55.500 57.500 15.500 64z" fill="#f6f6f5" /><path d="M11.500 17.500L45.500 12l6.500 43L18 60.500z" fill="#ececea" stroke="#888" />
        <path d="M24 23c3-4 9-3 8 1l-5 11c-2 5-8 4-6-1zM29 26c6-1 10 1 12 4l-4 8-10-3M39 35c4 2 5 5 2 8l-4 3M22 35l14 6" fill="none" stroke="#555" strokeWidth=".9" /><circle cx="35" cy="48" r="4.500" fill="none" stroke="#555" strokeWidth=".9" />
        <path d="M51 9c2-1.500 5.500-.5 5 2L43 56l-5 7 .5-9z" fill="#29323a" /><path d="M53 13L42 49" stroke="#75838e" />
      </DockItem>
      <DockItem>
        <path d="M7 23l28-6 7 37-28 9z" fill="#e9eaec" /><path d="M11 19l36-5 4 38-36 9z" fill="#dcecf3" /><path d="M15 18l31-5 7 38-31 8z" fill="#f8f9f9" />
        <path d="M19 22l26-4M20 26l26-4M20 30l26-4M21 34l26-4M21 38l26-4M22 42l26-4M23 46l26-4M23 50l26-4" stroke="#8a8a8a" strokeWidth="1.100" strokeDasharray="3 1 2 1.500" /><path d="M25 61c5-17 12-38 17-46 3-5 9-3 10 4l1 4" fill="none" stroke="#2a2b2c" strokeWidth="3.400" strokeLinecap="round" strokeLinejoin="round" /><path d="M52 21l6-3M54 24l5 0" fill="none" stroke="#2a2b2c" strokeWidth="2" />
      </DockItem>
      <DockItem>
        <path d="M9 15L47 9.500 55 57 17 64z" fill="#fbfbfa" /><path d="M11 20l36-5M12 24l36-5M12.500 28l36-5M13 32l36-5M14 36l36-5M14.500 40l36-5M15 44l36-5M16 48l36-5M16 52l36-5M17 56l36-5" stroke="#b9b9b7" strokeWidth=".7" /><path d="M13.500 15l8 48" stroke="#f3a0a0" strokeWidth=".8" />
        <path d="M50 10l4 1L42 57l-5 6 1-8z" fill="#7c98ae" stroke="#4e6070" strokeWidth=".6" /><path d="M51 14L40 54" stroke="#dbeaf4" strokeWidth="1.300" />
      </DockItem>
      <DockItem running>
        <defs>
          <linearGradient id="ff" x1="1" x2="0" y2="1"><stop stopColor="#ffe528" /><stop offset=".4" stopColor="#ff9a15" /><stop offset=".7" stopColor="#ff3a28" /><stop offset="1" stopColor="#f00a75" /></linearGradient>
          <linearGradient id="fg" x2="0" y2="1"><stop stopColor="#08a8f5" /><stop offset=".5" stopColor="#125bd8" /><stop offset="1" stopColor="#30107c" /></linearGradient>
        </defs>
        <g transform="translate(1 0)">
          <circle cx="33" cy="33" r="21" fill="url(#fg)" />
          <path d="M12 13c0 4 1 6 3 7 3-2 6-1 8-1 0-2 2-4 5-4 0 3 1 5 4 8 2 2 1 4-2 5-3 2-4 3-3 6 0 4 4 6 8 6 4-1 6-3 7-1 0 4-7 7-12 5 10 5 19 0 19-9 0-8-9-11-8-21 1-4 3-6 5-7 0 6 4 9 8 13 3 3 4 7 4 10 1-1 1-3 1-4 4 22-8 38-26 38C15 64 4 52 4 38c0-8 4-13 5-18 1-2 2-5 3-7z" fill="url(#ff)" />
          <path d="M41 19c0-6 2-10 5-12 0 7 5 10 9 16 7 12 2 22-8 24 8-7 6-14 0-18-4-3-6-6-6-10z" fill="#fff116" /><path d="M22 20c2-4 4-5 6-5 0 3 1 5 4 8-2 1-6 1-8 5z" fill="#ff831e" />
        </g>
      </DockItem>
      <DockItem>
        <rect x="6.500" y="10.500" width="52" height="52" rx="2.500" fill="#4a4a4a" /><path d="M17.300 25.500L48 16.500v11L35.500 31.500 48 35.500v12L17.300 57V45.500L30 41.500 17.300 37.500z" fill="#ff9800" /><path d="M35.500 31.500L48 35.500v3L30 41.500 26 40z" fill="#e07c00" opacity=".35" />
      </DockItem>
      <DockItem running>
        <path d="M13 12l44-.5L57 44H17z" fill="#f6f5ef" /><path d="M15 14h40v26H15z" fill="#9a7a43" /><path d="M17 16h37M15 19h39M17 22h37M17 26h37" stroke="#c8a769" strokeDasharray="2 3" /><path d="M6 21l43-6 7 36-45 8z" fill="#fbfbfb" /><path d="M8.500 23L47 17.500 53 48l-40.500 8z" fill="#9ecef5" /><path d="M10.500 35l39-5 3.500 18-40.500 8z" fill="#31629b" /><path d="M12 46c7-3 11 2 18-1s13-7 21-5l2 8-40.500 8z" fill="#d8e7e9" /><path d="M12 49l12 2-4 3-7.500 1.500z" fill="#475964" />
        <path d="M39 43l3 15c3 5 15 5 17 0l2-15z" fill="#9a978a" /><circle cx="50" cy="41" r="11" fill="#b9bfc2" /><circle cx="50" cy="41" r="9.300" fill="#7f97a8" stroke="#31373a" strokeWidth="1.500" /><path d="M43 41c4-4 8 0 13-3 0 7-9 10-13 3z" fill="#e8eef0" /><path d="M44 45c4-2 7 0 11-2-2 5-8 6-11 2z" fill="#a08c6c" />
      </DockItem>
      <span className="mx-[14px] mt-[10px] h-[57px] w-px shrink-0 bg-[#4f2e42]" />
      <DockItem>
        <path d="M16 7h22l12 14v20H16z" fill="#e8e8e6" /><path d="M11 14h26l15 15v35H11z" fill="#fbfbfa" /><path d="M37 9c4 3 8 8 14 16-4-2-8-3-12-1 1-6 1-10-2-15z" fill="#c4c4c2" /><path d="M38 10c2 5 3 9 1 14" fill="none" stroke="#fff" strokeWidth="1.500" /><path d="M18 18h17M19 27h12M19 31h18M19 34h18M19 39h16M19 45h8M19 49h19" stroke="#c8c8c6" strokeWidth=".7" />
        <text x="31.500" y="61" textAnchor="middle" fontFamily="Inter" fontSize="8.500" fill="#6b6b6b">DOCX</text>
      </DockItem>
      <DockItem>
        <path d="M19 28c-1-17 28-17 27 0 0 10-13 11-13 21" fill="none" stroke="#c5aebe" strokeWidth="4" /><path d="M30.500 54h5v5h-5z" fill="#c5aebe" />
      </DockItem>
      <DockItem>
        <rect x="2.700" y="16.700" width="59" height="38.500" rx="1" fill="#fdfdfd" stroke="#c9c9c9" strokeWidth="1" /><rect x="4" y="18" width="56.500" height="36" fill="none" stroke="#050505" strokeWidth="2.500" />
        <path d="M7 21h18M7 24h50M7 27h17M7 31h50M7 34h13M7 37h50M7 41h50M7 44h17M7 47h50M7 51h12" stroke="#a8a8a8" strokeWidth=".8" strokeDasharray="3 .7 5 .5" />
      </DockItem>
      <DockItem>
        <path d="M11 16l44 0-6 44c-2 5-31 5-33 0z" fill="#d9d6d5" opacity=".98" /><path d="M12 18l5 41M53 18l-5 41" stroke="#f0eeed" strokeWidth="2" opacity=".7" /><path d="M20 38c8 3 14-8 27-5M22 50c7-5 13 3 22-3" stroke="#e4e1e0" strokeWidth="4" fill="none" opacity=".5" /><ellipse cx="33" cy="14" rx="21.500" ry="5.500" fill="#77787a" stroke="#eeeeed" strokeWidth="1.300" />
        <path d="M15 14l5-5 6 3 3-5 6 1 4 5 6-4 5 6-7 4-8-2-6 3-7-3z" fill="#e7e8e9" /><path d="M18 15l5-3 3 5zM34 12l6 5-8 1zM43 13l5 2-5 2z" fill="#34353b" /><path d="M26 10l5 3-3 2z" fill="#21a9a1" /><path d="M39 15l3 1-2 2z" fill="#db5e30" />
      </DockItem>
    </div>
  );
}

export default function App() {
  return (
    <div className={`flex h-[768px] w-[1366px] flex-col overflow-hidden bg-black ${UI}`}>
      <MenuBar />
      <TabStrip />
      <NavBar />
      <BookmarkBar />
      <Page />
      <footer className="flex h-[77px] shrink-0">
        <Wallpaper box="0 153 726 231" streaks={leftStreaks} />
        <Dock />
        <Wallpaper box="847 183 721 229" streaks={rightStreaks} arc />
      </footer>
    </div>
  );
}
